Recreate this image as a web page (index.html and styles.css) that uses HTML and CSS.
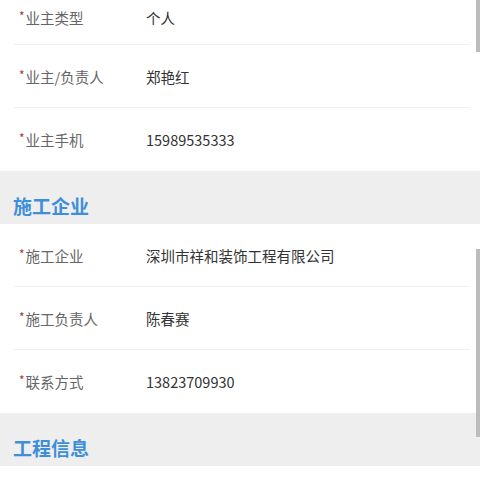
FILE: index.html
```html
<!DOCTYPE html>
<html lang="zh-CN">
<head>
    <meta charset="UTF-8">
    <meta name="viewport" content="width=device-width, initial-scale=1.0">
    <title>项目详情</title>
    <link rel="stylesheet" href="styles.css">
</head>
<body>

<div class="page">
    <ul class="field-list">
        <li class="row first"><span class="label"><i>*</i>业主类型</span><span class="value">个人</span></li>
        <li class="row"><span class="label"><i>*</i>业主/负责人</span><span class="value">郑艳红</span></li>
        <li class="row last"><span class="label"><i>*</i>业主手机</span><span class="value">15989535333</span></li>
    </ul>

    <h2 class="section-title">施工企业</h2>
    <ul class="field-list">
        <li class="row"><span class="label"><i>*</i>施工企业</span><span class="value">深圳市祥和装饰工程有限公司</span></li>
        <li class="row"><span class="label"><i>*</i>施工负责人</span><span class="value">陈春赛</span></li>
        <li class="row last"><span class="label"><i>*</i>联系方式</span><span class="value">13823709930</span></li>
    </ul>

    <h2 class="section-title">工程信息</h2>
    <div class="after"></div>

    <div class="scroll-bar top"></div>
    <div class="scroll-bar mid"></div>
</div>

</body>
</html>
```

FILE: styles.css
```css
body {
    margin: 0;
    background-color: #ffffff;
    font-family: "Noto Sans CJK SC", "Noto Sans", sans-serif;
    overflow: hidden;
}

.page {
    position: relative;
    width: 480px;
    height: 480px;
    overflow: hidden;
}

.field-list {
    list-style-type: none;
    margin: 0;
    padding: 0;
}

.row {
    display: flex;
    align-items: center;
    box-sizing: border-box;
    height: 63px;
    margin: 0 10px 0 14px;
    padding-left: 5px;
    border-bottom: 1px solid #f0f0f0;
    font-size: 14.5px;
}

.row.first {
    height: 45px;
    padding-bottom: 9px;
}

.row.last {
    border-bottom: none;
}

.label {
    width: 127px;
    color: #666666;
}

.label i {
    font-style: normal;
    color: #a8343c;
    font-size: 12px;
    vertical-align: 3px;
    margin-right: 1px;
}

.value {
    color: #333333;
}

.section-title {
    box-sizing: border-box;
    height: 53px;
    margin: 0;
    padding: 25px 0 0 13px;
    background-color: #eeeeee;
    color: #3f8edb;
    font-size: 19px;
    line-height: 19px;
    font-weight: bold;
}

.after {
    height: 20px;
}

.scroll-bar {
    position: absolute;
    right: 0;
    width: 4px;
    background-color: #bcbcbc;
}

.scroll-bar.top {
    top: 0;
    height: 52px;
}

.scroll-bar.mid {
    top: 249px;
    height: 188px;
}
```
